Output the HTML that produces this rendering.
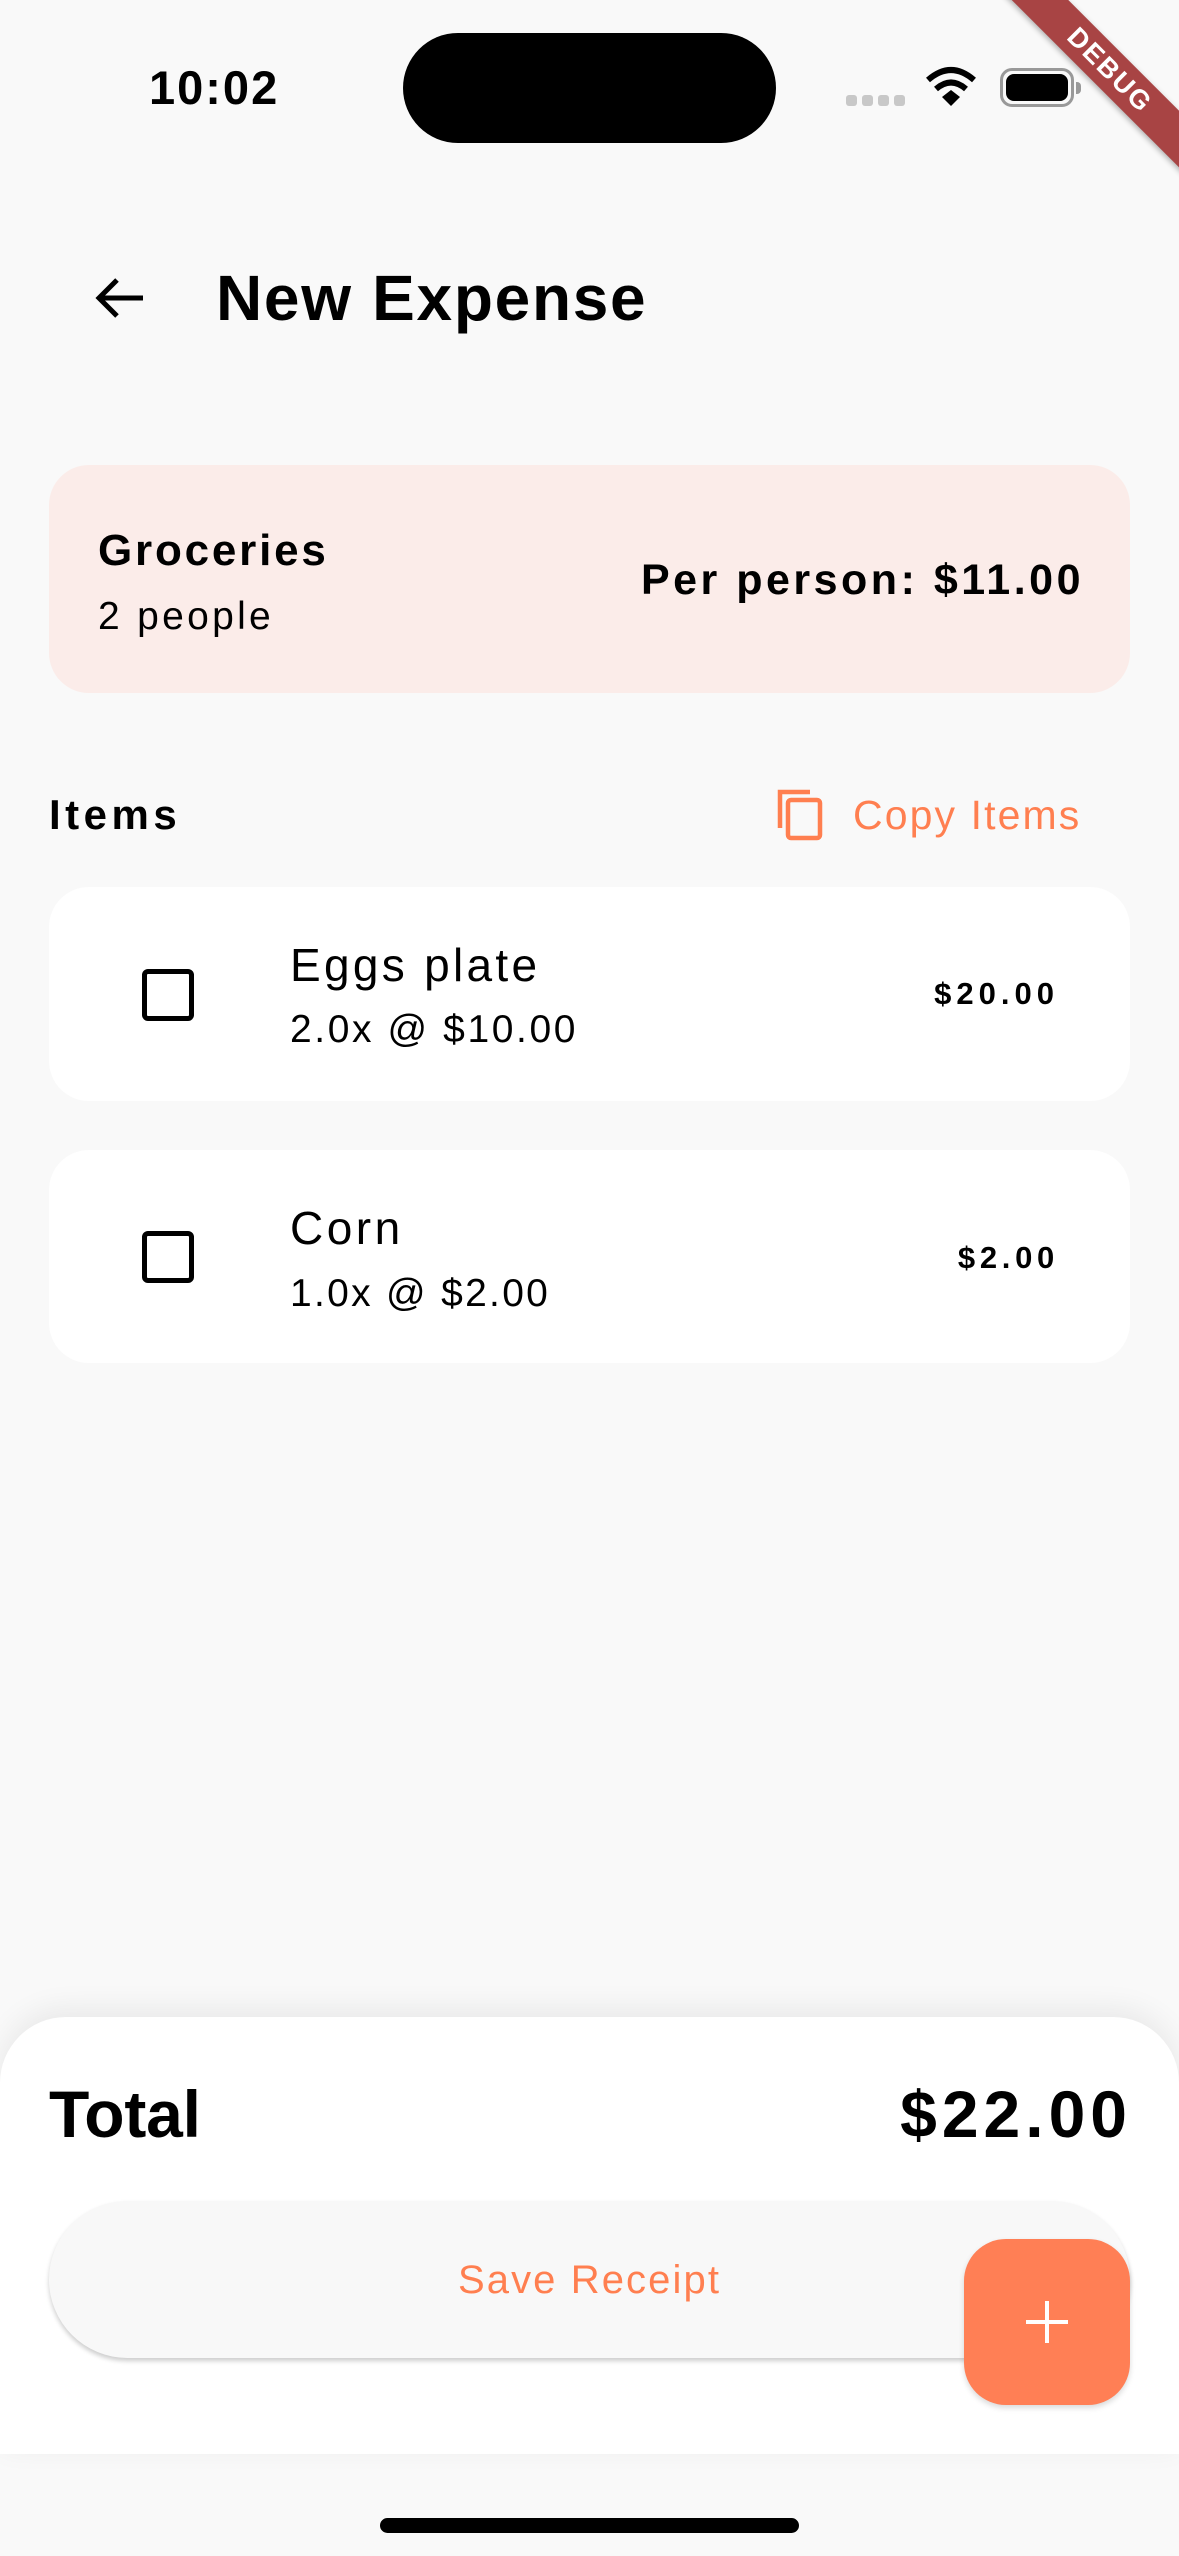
<!DOCTYPE html>
<html><head><meta charset="utf-8"><style>
*{margin:0;padding:0;box-sizing:border-box}
html,body{width:1179px;height:2556px;overflow:hidden;background:#F9F9F9;font-family:"Liberation Sans",sans-serif;color:#000}
.a{position:absolute;display:flex;align-items:center;white-space:nowrap;line-height:1}
.card{position:absolute;left:49px;width:1081px;background:#fff;border-radius:40px}
.cb{position:absolute;left:142px;width:52px;height:52px;border:5px solid #000;border-radius:6px}
</style></head><body>
<div class="a" style="left:149px;top:62px;height:50px;font-size:47px;font-weight:700;letter-spacing:2px">10:02</div>
<div style="position:absolute;left:403px;top:33px;width:373px;height:110px;border-radius:55px;background:#000"></div>
<div style="position:absolute;left:846px;top:95px;width:11px;height:11px;border-radius:3px;background:#c8c8c8"></div>
<div style="position:absolute;left:862px;top:95px;width:11px;height:11px;border-radius:3px;background:#c8c8c8"></div>
<div style="position:absolute;left:878px;top:95px;width:11px;height:11px;border-radius:3px;background:#c8c8c8"></div>
<div style="position:absolute;left:894px;top:95px;width:11px;height:11px;border-radius:3px;background:#c8c8c8"></div>
<svg style="position:absolute;left:924px;top:66px" width="54" height="42" viewBox="0 0 54 42">
<path d="M4 14 Q27 -6 50 14" fill="none" stroke="#000" stroke-width="6"/>
<path d="M12 23 Q27 10 42 23" fill="none" stroke="#000" stroke-width="6"/>
<path d="M18 31 L27 24 L36 31 L27 40 Z" fill="#000"/>
</svg>
<div style="position:absolute;left:1000px;top:68px;width:74px;height:39px;border:3px solid #999;border-radius:12px"></div>
<div style="position:absolute;left:1006px;top:74px;width:62px;height:27px;background:#000;border-radius:8px"></div>
<div style="position:absolute;left:1076px;top:82px;width:5px;height:12px;background:#999;border-radius:0 4px 4px 0"></div>
<div style="position:absolute;left:910px;top:50px;width:400px;height:40px;background:#A84444;transform:rotate(45deg);display:flex;align-items:center;justify-content:center;color:#fff;font-weight:700;font-size:27px;letter-spacing:2px;box-shadow:0 2px 6px rgba(0,0,0,.3)">DEBUG</div>
<svg style="position:absolute;left:93px;top:274px" width="56" height="48" viewBox="0 0 56 48">
<path d="M50 24 H8 M24 6 L6 24 L24 42" fill="none" stroke="#000" stroke-width="5"/>
</svg>
<div class="a" style="left:216px;top:258px;height:80px;font-size:64px;font-weight:700;letter-spacing:1.7px">New Expense</div>
<div style="position:absolute;left:49px;top:465px;width:1081px;height:228px;background:#FBECE9;border-radius:40px"></div>
<div class="a" style="left:98px;top:526px;height:50px;font-size:44px;font-weight:700;letter-spacing:2.8px">Groceries</div>
<div class="a" style="left:98px;top:593px;height:46px;font-size:39px;letter-spacing:3.3px">2 people</div>
<div class="a" style="left:500px;width:584px;justify-content:flex-end;top:555px;height:50px;font-size:43px;font-weight:700;letter-spacing:3.5px">Per person: $11.00</div>
<div class="a" style="left:49px;top:790px;height:50px;font-size:42px;font-weight:700;letter-spacing:4.5px">Items</div>
<svg style="position:absolute;left:774px;top:784px" width="52" height="60" viewBox="0 0 52 60">
<path d="M6 44 V8 H36" fill="none" stroke="#FF7F50" stroke-width="4.5"/>
<rect x="14" y="16" width="32" height="38" rx="3" fill="none" stroke="#FF7F50" stroke-width="4.5"/>
</svg>
<div class="a" style="left:853px;top:790px;height:50px;font-size:41px;color:#FF7F50;letter-spacing:2.1px">Copy Items</div>
<div class="card" style="top:887px;height:214px"></div>
<div class="cb" style="top:969px"></div>
<div class="a" style="left:290px;top:940px;height:50px;font-size:46px;letter-spacing:3.3px">Eggs plate</div>
<div class="a" style="left:290px;top:1006px;height:46px;font-size:39px;letter-spacing:2.6px">2.0x @ $10.00</div>
<div class="a" style="left:800px;width:259px;justify-content:flex-end;top:975px;height:36px;font-size:31px;font-weight:700;letter-spacing:5px">$20.00</div>
<div class="card" style="top:1150px;height:213px"></div>
<div class="cb" style="top:1231px"></div>
<div class="a" style="left:290px;top:1203px;height:50px;font-size:46px;letter-spacing:3.5px">Corn</div>
<div class="a" style="left:290px;top:1270px;height:46px;font-size:39px;letter-spacing:2.3px">1.0x @ $2.00</div>
<div class="a" style="left:800px;width:259px;justify-content:flex-end;top:1239px;height:36px;font-size:31px;font-weight:700;letter-spacing:4.7px">$2.00</div>
<div style="position:absolute;left:0;top:2017px;width:1179px;height:437px;background:#fff;border-radius:66px 66px 0 0;box-shadow:0 -8px 30px rgba(0,0,0,.07)"></div>
<div class="a" style="left:49px;top:2076px;height:76px;font-size:66px;font-weight:700;letter-spacing:-0.2px">Total</div>
<div class="a" style="left:700px;width:432px;justify-content:flex-end;top:2076px;height:76px;font-size:66px;font-weight:700;letter-spacing:5px">$22.00</div>
<div style="position:absolute;left:49px;top:2201px;width:1081px;height:157px;background:#F8F8F8;border-radius:79px;box-shadow:0 3px 5px rgba(0,0,0,.2)"></div>
<div class="a" style="left:49px;width:1081px;justify-content:center;top:2256px;height:48px;font-size:40px;color:#FF7F50;letter-spacing:2.1px">Save Receipt</div>
<div style="position:absolute;left:964px;top:2239px;width:166px;height:166px;background:#FF7F55;border-radius:42px;box-shadow:0 3px 6px rgba(0,0,0,.15)"></div>
<div style="position:absolute;left:1045px;top:2301px;width:4px;height:42px;background:#fff"></div>
<div style="position:absolute;left:1026px;top:2320px;width:42px;height:4px;background:#fff"></div>
<div style="position:absolute;left:380px;top:2518px;width:419px;height:15px;border-radius:8px;background:#000"></div>
</body></html>
